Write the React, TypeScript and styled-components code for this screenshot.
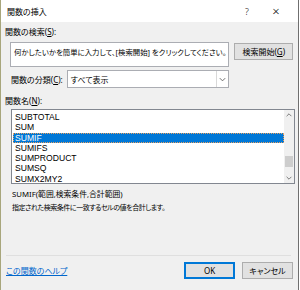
import styled, { createGlobalStyle } from 'styled-components';

const GlobalStyle = createGlobalStyle`
    html, body {
        margin: 0;
        padding: 0;
        background: #ffffff;
    }
    * {
        box-sizing: border-box;
    }
`;

const font = `"Noto Sans", "Noto Sans CJK JP", sans-serif`;

const Window = styled.div`
    display: flex;
    flex-direction: column;
    width: 299px;
    height: 290px;
    border-left: 1px solid #a8a67c;
    border-right: 1px solid #6f6f6f;
    background: #f0f0f0;
    font-family: ${font};
    font-size: 8px;
    color: #000;
    font-feature-settings: 'palt';
`;

const TitleBar = styled.div`
    display: flex;
    align-items: center;
    height: 22px;
    padding-left: 6px;
    background: #ffffff;
    font-size: 8px;
`;

const Title = styled.span`
    flex: 1;
`;

const TitleButton = styled.span<{ w: number }>`
    width: ${(p) => p.w}px;
    text-align: center;
    font-size: ${(p) => (p.w > 30 ? 13 : 9)}px;
    font-weight: 300;
`;

const Body = styled.div`
    display: flex;
    flex-direction: column;
    flex: 1;
    padding: 4px 5px 0 4px;
`;

const Label = styled.div`
    height: 12px;
    line-height: 12px;
    white-space: nowrap;
`;

const Key = styled.span`
    text-decoration: underline;
`;

const SearchRow = styled.div`
    display: flex;
    align-items: flex-start;
    margin-top: 4px;
    padding-left: 5px;
`;

const SearchBox = styled.div`
    width: 221px;
    height: 25px;
    padding: 3px 0 0 3px;
    background: #fff;
    border: 1px solid #abadb3;
    font-size: 7.4px;
    line-height: 12px;
    white-space: nowrap;
    overflow: hidden;
`;

const Button = styled.div<{ w: number; primary?: boolean }>`
    display: flex;
    align-items: center;
    justify-content: center;
    width: ${(p) => p.w}px;
    height: 17px;
    background: #e1e1e1;
    border: 1px solid ${(p) => (p.primary ? '#0078d7' : '#adadad')};
    box-shadow: ${(p) => (p.primary ? 'inset 0 0 0 1px #0078d7' : 'none')};
    white-space: nowrap;
`;

const SearchButton = styled(Button)`
    margin: 1px 0 0 5px;
`;

const CategoryRow = styled.div`
    display: flex;
    align-items: center;
    margin-top: 3px;
    padding-left: 6px;
`;

const Select = styled.div`
    display: flex;
    align-items: center;
    width: 162px;
    height: 18px;
    margin-left: 4px;
    background: #fff;
    border: 1px solid #abadb3;
`;

const SelectText = styled.span`
    flex: 1;
    padding-left: 3px;
`;

const SelectArrow = styled.div`
    display: flex;
    align-items: center;
    justify-content: center;
    width: 12px;
    height: 16px;
    border-left: 1px solid #d9d9d9;
`;

const NameLabel = styled(Label)`
    margin-top: 7px;
`;

const ListBox = styled.div`
    display: flex;
    width: 284px;
    height: 75px;
    margin: 2px 0 0 6px;
    background: #fff;
    border: 1px solid #828790;
`;

const Items = styled.div`
    flex: 1;
    padding-left: 1px;
    overflow: hidden;
`;

const Item = styled.div<{ selected?: boolean }>`
    height: 10.3px;
    line-height: 10.3px;
    padding-left: 2px;
    font-family: "Liberation Sans", sans-serif;
    font-size: 8.6px;
    color: ${(p) => (p.selected ? '#fff' : '#000')};
    background: ${(p) => (p.selected ? '#0078d7' : 'transparent')};
    outline: ${(p) => (p.selected ? '1px dotted #e8a060' : 'none')};
    outline-offset: -1px;
    white-space: nowrap;
`;

const FirstItem = styled(Item)`
    margin-top: 2px;
`;

const ScrollBar = styled.div`
    display: flex;
    flex-direction: column;
    width: 10px;
    background: #f0f0f0;
`;

const ScrollArrow = styled.div`
    display: flex;
    align-items: center;
    justify-content: center;
    height: 10px;
`;

const ScrollTrack = styled.div`
    flex: 1;
    display: flex;
    flex-direction: column;
    justify-content: flex-end;
    padding: 0 1px 6px 1px;
`;

const Thumb = styled.div`
    height: 11px;
    background: #cdcdcd;
`;

const Syntax = styled.div`
    margin: 4px 0 0 7px;
    font-size: 7.8px;
    line-height: 13px;
    white-space: nowrap;
`;

const Description = styled.div`
    margin-left: 7px;
    font-size: 7px;
    letter-spacing: -0.45px;
    line-height: 13px;
    white-space: nowrap;
`;

const Spacer = styled.div`
    flex: 1;
`;

const Separator = styled.div`
    height: 1px;
    margin: 0 2px 0 1px;
    background: #dfdfdf;
`;

const Footer = styled.div`
    display: flex;
    align-items: center;
    height: 34px;
    padding-bottom: 6px;
`;

const HelpLink = styled.a`
    flex: 1;
    padding-left: 1px;
    color: #0066cc;
    text-decoration: underline;
    white-space: nowrap;
    cursor: pointer;
`;

const Buttons = styled.div`
    display: flex;
    gap: 7px;
`;

const Chevron = ({ dir, size }: { dir: 'up' | 'down'; size: number }) => (
    <svg width={size} height={size} viewBox="0 0 10 10">
        <polyline
            points={dir === 'up' ? '2,6.5 5,3.5 8,6.5' : '2,3.5 5,6.5 8,3.5'}
            fill="none"
            stroke="#606060"
            strokeWidth="1"
        />
    </svg>
);

const functions = ['SUBTOTAL', 'SUM', 'SUMIF', 'SUMIFS', 'SUMPRODUCT', 'SUMSQ', 'SUMX2MY2'];

const App = () => {
    return (
        <>
            <GlobalStyle />
            <Window>
                <TitleBar>
                    <Title>関数の挿入</Title>
                    <TitleButton w={14}>?</TitleButton>
                    <TitleButton w={44}>×</TitleButton>
                </TitleBar>
                <Body>
                    <Label>
                        関数の検索(<Key>S</Key>):
                    </Label>
                    <SearchRow>
                        <SearchBox>
                            何かしたいかを簡単に入力して、[検索開始] をクリックしてください。
                        </SearchBox>
                        <SearchButton w={59}>
                            検索開始(<Key>G</Key>)
                        </SearchButton>
                    </SearchRow>
                    <CategoryRow>
                        <span>
                            関数の分類(<Key>C</Key>):
                        </span>
                        <Select>
                            <SelectText>すべて表示</SelectText>
                            <SelectArrow>
                                <Chevron dir="down" size={9} />
                            </SelectArrow>
                        </Select>
                    </CategoryRow>
                    <NameLabel>
                        関数名(<Key>N</Key>):
                    </NameLabel>
                    <ListBox>
                        <Items>
                            {functions.map((f, i) => {
                                const Row = i === 0 ? FirstItem : Item;
                                return (
                                    <Row key={f} selected={f === 'SUMIF'}>
                                        {f}
                                    </Row>
                                );
                            })}
                        </Items>
                        <ScrollBar>
                            <ScrollArrow>
                                <Chevron dir="up" size={8} />
                            </ScrollArrow>
                            <ScrollTrack>
                                <Thumb />
                            </ScrollTrack>
                            <ScrollArrow>
                                <Chevron dir="down" size={8} />
                            </ScrollArrow>
                        </ScrollBar>
                    </ListBox>
                    <Syntax>SUMIF(範囲,検索条件,合計範囲)</Syntax>
                    <Description>指定された検索条件に一致するセルの値を合計します。</Description>
                    <Spacer />
                    <Separator />
                    <Footer>
                        <HelpLink>この関数のヘルプ</HelpLink>
                        <Buttons>
                            <Button w={51} primary>
                                OK
                            </Button>
                            <Button w={51}>キャンセル</Button>
                        </Buttons>
                    </Footer>
                </Body>
            </Window>
        </>
    );
};

export default App;
